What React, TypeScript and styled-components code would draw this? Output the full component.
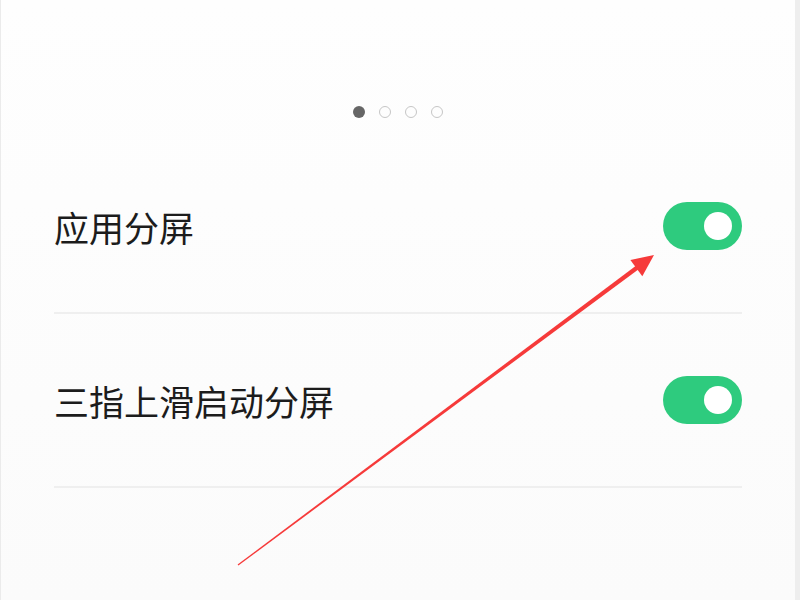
import React from "react";
import styled, { createGlobalStyle } from "styled-components";

const Global = createGlobalStyle`
  html, body { margin: 0; padding: 0; background: #fdfdfd; }
  body { font-family: "Noto Sans CJK SC", "Noto Sans", sans-serif; }
`;

const Page = styled.div`
  position: relative;
  width: 800px;
  height: 600px;
  box-sizing: border-box;
  border-left: 1px solid #ebebeb;
  border-right: 5px solid #eeeeee;
  background: linear-gradient(#fefefe, #fbfbfb);
  overflow: hidden;
  display: flex;
  flex-direction: column;
`;

const Dots = styled.div`
  display: flex;
  justify-content: center;
  align-items: center;
  gap: 14px;
  margin-top: 105px;
  height: 13px;
`;

const Dot = styled.span<{ $active?: boolean }>`
  width: 12px;
  height: 12px;
  box-sizing: border-box;
  border-radius: 50%;
  background: ${(p) => (p.$active ? "#666666" : "transparent")};
  border: ${(p) => (p.$active ? "none" : "1.5px solid #c6c6c6")};
`;

const List = styled.div`
  margin-top: 22px;
  padding: 0 53px 0 53px;
  display: flex;
  flex-direction: column;
`;

const Row = styled.div`
  height: 172px;
  display: flex;
  align-items: center;
  justify-content: space-between;
  border-bottom: 2px solid #efefef;
`;

const Label = styled.span`
  font-size: 35px;
  color: #1c1c1c;
  letter-spacing: 0px;
  line-height: 1;
`;

const Toggle = styled.div<{ $on?: boolean }>`
  width: 79px;
  height: 48px;
  border-radius: 24px;
  background: ${(p) => (p.$on ? "#2ecb7e" : "#d8d8d8")};
  display: flex;
  align-items: center;
  justify-content: ${(p) => (p.$on ? "flex-end" : "flex-start")};
  padding: 0 10px;
  box-sizing: border-box;
`;

const Knob = styled.span`
  width: 28px;
  height: 28px;
  border-radius: 50%;
  background: #ffffff;
`;

const ArrowLayer = styled.svg`
  position: absolute;
  left: -1px;
  top: 0;
  pointer-events: none;
`;

function Arrow() {
  const tail = [238, 565];
  const tip = [654, 255];
  const dx = tip[0] - tail[0];
  const dy = tip[1] - tail[1];
  const len = Math.hypot(dx, dy);
  const u = [dx / len, dy / len];
  const n = [-u[1], u[0]];
  const headLen = 22;
  const headHalf = 10;
  const base = [tip[0] - u[0] * headLen, tip[1] - u[1] * headLen];
  const shaftBase = [base[0] + u[0] * 2, base[1] + u[1] * 2];
  const p = (a: number[]) => `${a[0].toFixed(1)},${a[1].toFixed(1)}`;
  const add = (a: number[], s: number) => [a[0] + n[0] * s, a[1] + n[1] * s];
  const shaft = [add(tail, 0.6), add(shaftBase, 2.2), add(shaftBase, -2.2), add(tail, -0.6)]
    .map(p)
    .join(" ");
  const head = [p(tip), p(add(base, headHalf)), p(add(base, -headHalf))].join(" ");
  return (
    <ArrowLayer width={800} height={600} viewBox="0 0 800 600">
      <polygon points={shaft} fill="#f63a3a" />
      <polygon points={head} fill="#f63a3a" />
    </ArrowLayer>
  );
}

export default function App() {
  return (
    <>
      <Global />
      <Page>
        <Dots>
          <Dot $active />
          <Dot />
          <Dot />
          <Dot />
        </Dots>
        <List>
          <Row>
            <Label>应用分屏</Label>
            <Toggle $on>
              <Knob />
            </Toggle>
          </Row>
          <Row>
            <Label>三指上滑启动分屏</Label>
            <Toggle $on>
              <Knob />
            </Toggle>
          </Row>
        </List>
        <Arrow />
      </Page>
    </>
  );
}
